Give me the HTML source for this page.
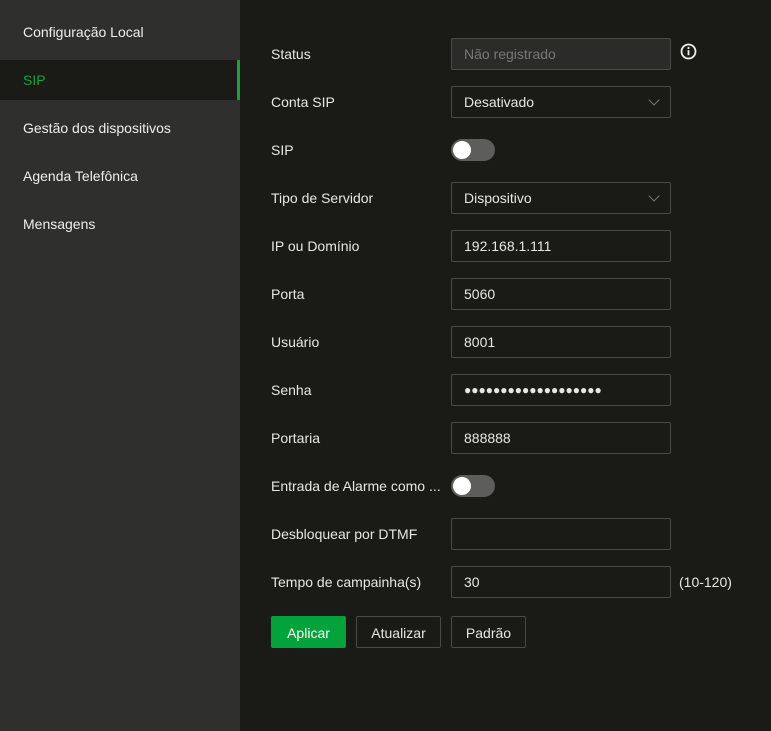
<!DOCTYPE html><html><head><style>
body{margin:0;width:771px;height:731px;background:#1a1b17;font-family:"Liberation Sans",sans-serif;font-size:14px;color:#e6e6e6;position:relative;overflow:hidden}
.side{position:absolute;left:0;top:0;width:240px;height:731px;background:#2f302e}
.it{position:absolute;left:23px;height:40px;line-height:40px;font-size:14px;color:#eee}
.act{position:absolute;left:0;top:60px;width:240px;height:40px;background:#1a1b17}
.bar{position:absolute;left:237px;top:60px;width:3px;height:40px;background:#12a53a}
.lbl{position:absolute;left:271px;height:20px;line-height:20px}
.inp{position:absolute;left:451px;width:218px;height:30px;border:1px solid #4a4b48;border-radius:2px;line-height:30px;padding-left:12px;box-sizing:border-box;width:220px;height:32px}
.tg{position:absolute;left:451px;width:44px;height:22px;border-radius:11px;background:#5d5e5b}
.tg:after{content:"";position:absolute;left:2px;top:2px;width:18px;height:18px;border-radius:50%;background:#fff}
.chev{position:absolute;right:12px;top:9px;width:7px;height:7px;border-right:1px solid #777;border-bottom:1px solid #777;transform:rotate(45deg)}
.btn{position:absolute;top:616px;height:32px;line-height:32px;text-align:center;border:1px solid #4a4b48;border-radius:2px;box-sizing:border-box}
</style></head><body>
<div class="side"></div><div class="act"></div><div class="bar"></div>
<div class="it" style="top:12px">Configuração Local</div>
<div class="it" style="top:60px;color:#12a53a">SIP</div>
<div class="it" style="top:108px">Gestão dos dispositivos</div>
<div class="it" style="top:156px">Agenda Telefônica</div>
<div class="it" style="top:204px">Mensagens</div>

<div class="lbl" style="top:44px">Status</div>
<div class="inp" style="top:38px;background:#2b2c29;color:#777">Não registrado</div>
<svg style="position:absolute;left:680px;top:43px" width="17" height="17" viewBox="0 0 17 17"><circle cx="8.5" cy="8.5" r="7" fill="none" stroke="#eee" stroke-width="1.8"/><rect x="7.6" y="7.2" width="1.8" height="5" fill="#eee"/><circle cx="8.5" cy="5" r="1.1" fill="#eee"/></svg>
<div class="lbl" style="top:92px">Conta SIP</div>
<div class="inp" style="top:86px">Desativado<div class="chev"></div></div>
<div class="lbl" style="top:140px">SIP</div>
<div class="tg" style="top:139px"></div>
<div class="lbl" style="top:188px">Tipo de Servidor</div>
<div class="inp" style="top:182px">Dispositivo<div class="chev"></div></div>
<div class="lbl" style="top:236px">IP ou Domínio</div>
<div class="inp" style="top:230px">192.168.1.111</div>
<div class="lbl" style="top:284px">Porta</div>
<div class="inp" style="top:278px">5060</div>
<div class="lbl" style="top:332px">Usuário</div>
<div class="inp" style="top:326px">8001</div>
<div class="lbl" style="top:380px">Senha</div>
<div class="inp" style="top:374px;font-size:12px;letter-spacing:0px">●●●●●●●●●●●●●●●●●●●</div>
<div class="lbl" style="top:428px">Portaria</div>
<div class="inp" style="top:422px">888888</div>
<div class="lbl" style="top:476px">Entrada de Alarme como ...</div>
<div class="tg" style="top:475px"></div>
<div class="lbl" style="top:524px">Desbloquear por DTMF</div>
<div class="inp" style="top:518px"></div>
<div class="lbl" style="top:572px">Tempo de campainha(s)</div>
<div class="inp" style="top:566px">30</div>
<div class="lbl" style="top:572px;left:679px">(10-120)</div>
<div class="btn" style="left:271px;width:75px;background:#02a33a;border-color:#02a33a;color:#fff">Aplicar</div>
<div class="btn" style="left:356px;width:85px">Atualizar</div>
<div class="btn" style="left:451px;width:75px">Padrão</div>
</body></html>
